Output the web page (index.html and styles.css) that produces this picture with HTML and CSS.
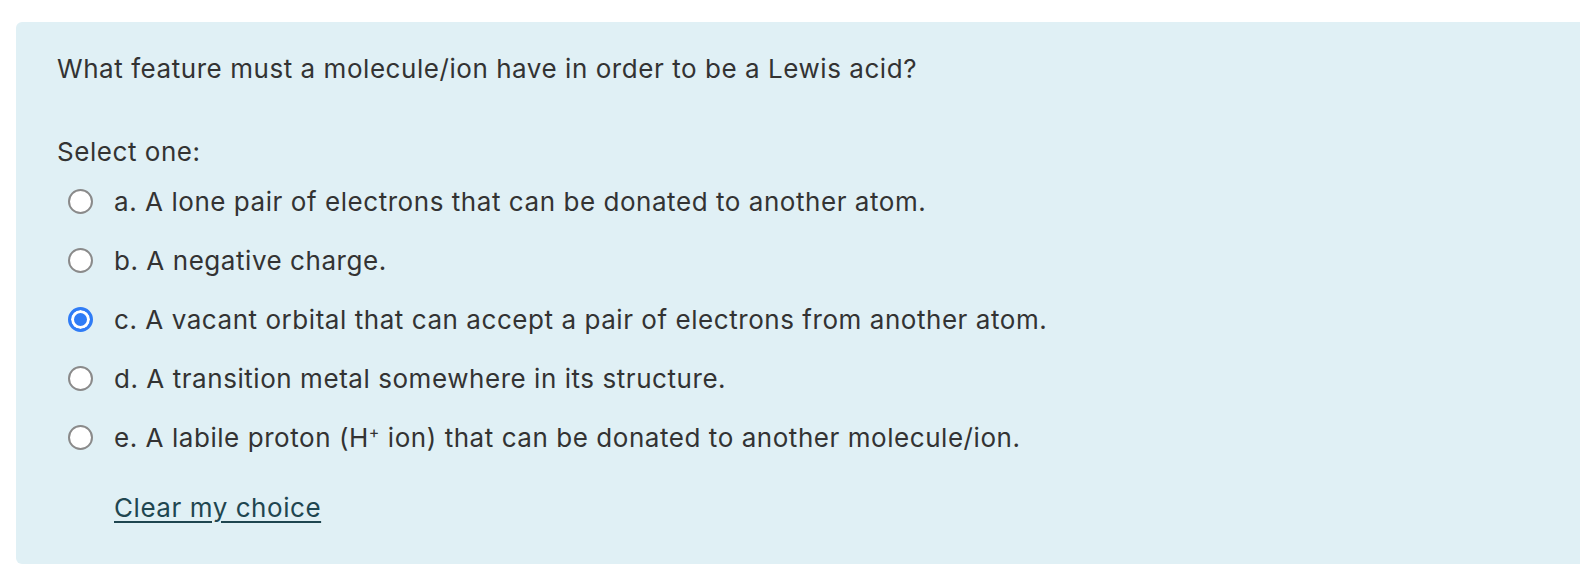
FILE: index.html
```html
<!DOCTYPE html>
<html>
<head>
<meta charset="utf-8">
<link rel="stylesheet" href="styles.css">
</head>
<body>
<div class="formulation">
  <div class="qtext">What feature must a molecule/ion have in order to be a Lewis acid?</div>
  <div class="prompt">Select one:</div>
  <div class="answer">
    <div class="option"><span class="radio"></span><span class="label">a. A lone pair of electrons that can be donated to another atom.</span></div>
    <div class="option"><span class="radio"></span><span class="label">b. A negative charge.</span></div>
    <div class="option"><span class="radio checked"></span><span class="label">c. A vacant orbital that can accept a pair of electrons from another atom.</span></div>
    <div class="option"><span class="radio"></span><span class="label">d. A transition metal somewhere in its structure.</span></div>
    <div class="option"><span class="radio"></span><span class="label">e. A labile proton (H<sup>+</sup> ion) that can be donated to another molecule/ion.</span></div>
  </div>
  <div class="clear"><a href="#">Clear my choice</a></div>
</div>
</body>
</html>
```

FILE: styles.css
```css
html, body {
  margin: 0;
  padding: 0;
  background: #ffffff;
}
body {
  font-family: Inter, "Liberation Sans", Arial, sans-serif;
  font-size: 26px;
  letter-spacing: 0.55px;
  line-height: 36px;
  color: #333333;
}
.formulation {
  margin: 22px 0 0 16px;
  background: #e0f0f5;
  border-radius: 6px 0 0 6px;
  padding: 29px 0 38px 41px;
}
.qtext {
  height: 36px;
}
.prompt {
  margin-top: 47px;
  margin-bottom: 2px;
}
.answer {
  display: flex;
  flex-direction: column;
}
.option {
  height: 59px;
  display: flex;
  align-items: center;
}
.radio {
  width: 25px;
  height: 25px;
  box-sizing: border-box;
  border-radius: 50%;
  border: 2px solid #8a8a8a;
  background: #ffffff;
  margin-left: 11px;
  margin-right: 21px;
  flex: none;
}
.radio.checked {
  border: 3px solid #2f7cf6;
  background: #2f7cf6;
  box-shadow: inset 0 0 0 3px #ffffff;
}
sup {
  font-size: 16px;
  line-height: 0;
  vertical-align: 9px;
}
.clear {
  margin-top: 23px;
  padding-left: 57px;
}
.clear a {
  color: #1f4650;
  text-decoration: underline;
  text-decoration-thickness: 2px;
  text-underline-offset: 4px;
}
```
